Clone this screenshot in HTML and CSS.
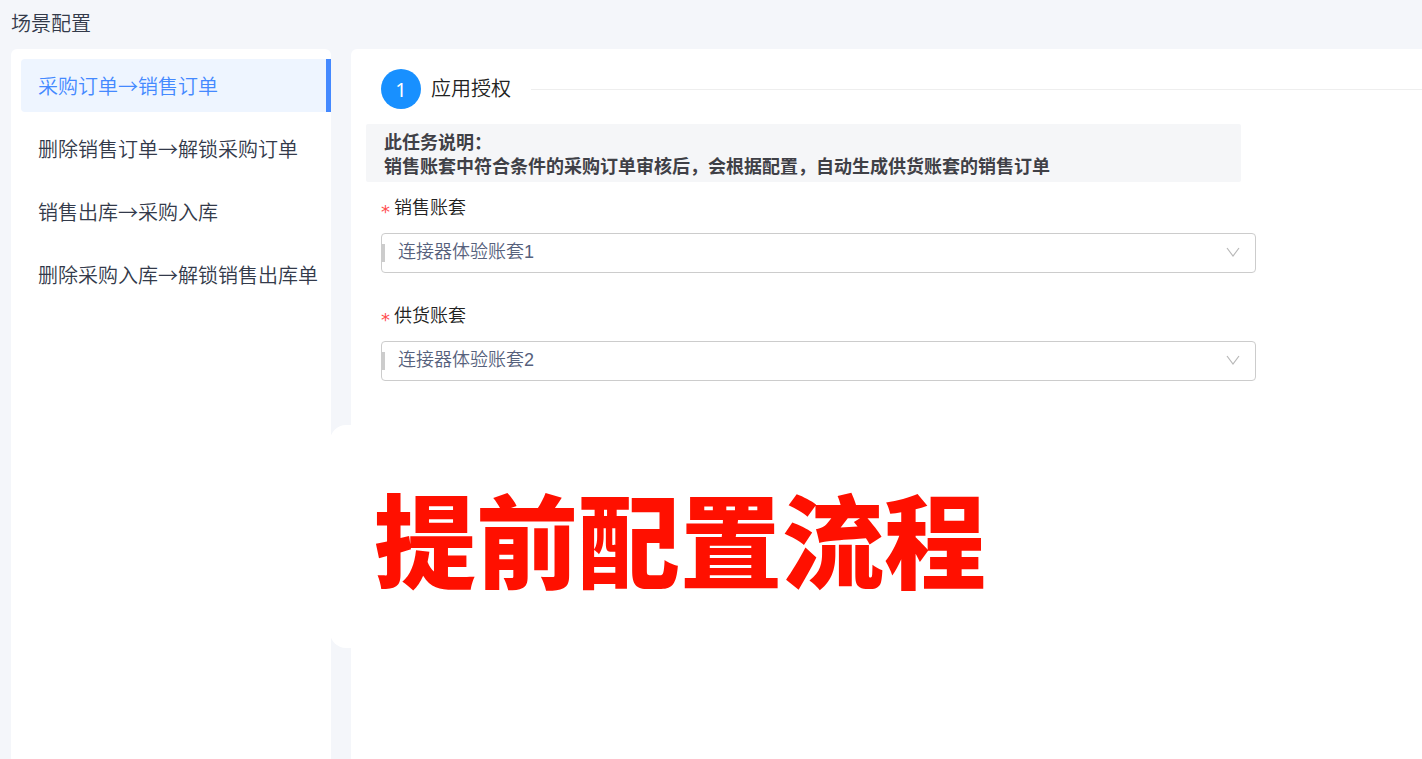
FILE: index.html
```
<!DOCTYPE html>
<html lang="zh-CN">

	<head>
		<meta charset="UTF-8">
		<title>场景配置</title>
		<link rel="stylesheet" href="styles.css">
	</head>

	<body>
		<div class="page">
			<h1 class="page-title">场景配置</h1>
			<div class="main">
				<nav class="side">
					<a class="active" href="#">采购订单→销售订单</a>
					<a href="#">删除销售订单→解锁采购订单</a>
					<a href="#">销售出库→采购入库</a>
					<a href="#">删除采购入库→解锁销售出库单</a>
				</nav>
				<div class="content">
					<div class="step">
						<span class="num">1</span>
						<h2>应用授权</h2>
					</div>
					<div class="desc">
						<p>此任务说明：</p>
						<p>销售账套中符合条件的采购订单审核后，会根据配置，自动生成供货账套的销售订单</p>
					</div>
					<form class="form">
						<div class="item">
							<label for="sale"><i>*</i>销售账套</label>
							<div class="select">
								<select id="sale">
									<option>连接器体验账套1</option>
									<option>连接器体验账套2</option>
								</select>
								<svg class="arrow" viewBox="0 0 14 10"><path d="M1 1 L7 9 L13 1"/></svg>
							</div>
						</div>
						<div class="item">
							<label for="supply"><i>*</i>供货账套</label>
							<div class="select">
								<select id="supply">
									<option>连接器体验账套1</option>
									<option selected>连接器体验账套2</option>
								</select>
								<svg class="arrow" viewBox="0 0 14 10"><path d="M1 1 L7 9 L13 1"/></svg>
							</div>
						</div>
					</form>
				</div>
				<!-- 浮在两栏上面的标题 -->
				<div class="banner">提前配置流程</div>
			</div>
		</div>
	</body>

</html>
```
FILE: styles.css
```
* {
	margin: 0;
	padding: 0;
	box-sizing: border-box;
}

body {
	background: #f4f6fa;
	color: #333a4a;
	font: 350 20px/30px "Liberation Sans", "Noto Sans CJK SC", sans-serif;
}

.page {
	display: flex;
	flex-direction: column;
	min-height: 100vh;
	padding: 9px 0 0 11px;
}

.page-title {
	font-size: 20px;
	font-weight: 350;
	margin-bottom: 10px;
}

.main {
	display: flex;
	flex: 1;
	gap: 20px;
	position: relative;
}

.side {
	display: flex;
	flex-direction: column;
	gap: 10px;
	flex: 0 0 320px;
	padding: 10px 0 10px 10px;
	background: #fff;
	border-radius: 6px 6px 0 0;
}

.side a {
	padding: 11px 0 11px 17px;
	color: #333a4a;
	text-decoration: none;
	white-space: nowrap;
	line-height: 31px;
	font-family: "Noto Sans CJK SC", sans-serif;
}

.side a.active {
	color: #4489ff;
	background: #eef5ff;
	border-right: 5px solid #4489ff;
	border-radius: 4px 0 0 4px;
}

.content {
	flex: 1;
	min-width: 0;
	padding: 20px 0 20px 15px;
	background: #fff;
	border-radius: 6px 0 0 0;
}

.step {
	display: flex;
	align-items: center;
	gap: 10px;
	padding-left: 15px;
	color: #222;
}

.step .num {
	width: 40px;
	height: 40px;
	border-radius: 50%;
	background: #1890ff;
	color: #fff;
	line-height: 42px;
	text-align: center;
	font-family: "Noto Sans", sans-serif;
	font-weight: 400;
}

.step h2 {
	font-size: 20px;
	font-weight: 350;
	line-height: 32px;
}

/* 标题右边的横线 */
.step::after {
	content: "";
	flex: 1;
	height: 1px;
	margin-left: 10px;
	background: #eee;
}

.desc {
	max-width: 875px;
	margin-top: 15px;
	padding: 7px 18px 3px;
	background: #f5f6f8;
	border-radius: 2px;
	color: #3f4046;
	font-size: 18px;
	font-weight: bold;
	line-height: 24px;
}

.form {
	display: flex;
	flex-direction: column;
	gap: 30px;
	max-width: 890px;
	margin-top: 13px;
	padding-left: 15px;
}

.item {
	display: flex;
	flex-direction: column;
	gap: 12px;
}

.item label {
	display: flex;
	gap: 4px;
	height: 26px;
	color: #222;
	font-size: 18px;
	line-height: 26px;
}

.item label i {
	color: #ff4d4f;
	font-family: "DejaVu Sans", sans-serif;
	font-style: normal;
	font-weight: 400;
	line-height: 34px;
}

.select {
	position: relative;
}

.select select {
	display: block;
	appearance: none;
	width: 100%;
	height: 40px;
	padding: 0 40px 2px 16px;
	background: #fff;
	border: 1px solid #ccc;
	border-radius: 4px;
	color: #56617c;
	font: inherit;
	font-size: 18px;
}

.select::before {
	content: "";
	position: absolute;
	left: 1px;
	top: 11px;
	width: 3px;
	height: 18px;
	background: #ccc;
}

.select .arrow {
	position: absolute;
	right: 16px;
	top: 14px;
	width: 14px;
	height: 10px;
	fill: none;
	stroke: #b8b8b8;
	stroke-width: 1.2;
	pointer-events: none;
}

.banner {
	position: absolute;
	left: 319px;
	top: 376px;
	padding: 36px 44px;
	background: #fff;
	border-radius: 16px;
	color: #ff1000;
	font: 900 102px/151px "Noto Sans CJK SC", sans-serif;
	white-space: nowrap;
}
```
